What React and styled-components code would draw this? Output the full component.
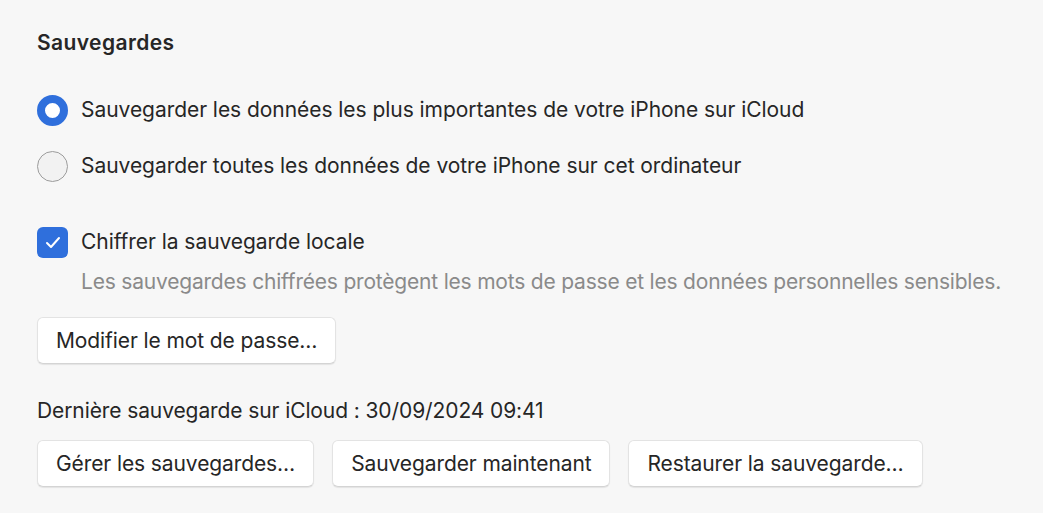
import React, { useState } from "react";
import styled, { createGlobalStyle } from "styled-components";

const GlobalStyle = createGlobalStyle`
  html, body {
    margin: 0;
    padding: 0;
    background: #f7f7f7;
  }
  body {
    font-family: Inter, "Noto Sans", "Liberation Sans", sans-serif;
    color: #262626;
    -webkit-font-smoothing: antialiased;
  }
`;

const Panel = styled.div`
  width: 1043px;
  height: 513px;
  box-sizing: border-box;
  padding: 29px 0 0 37px;
  display: flex;
  flex-direction: column;
`;

const Title = styled.h2`
  margin: 0;
  font-size: 21px;
  font-weight: 600;
  line-height: 28px;
  letter-spacing: 0.4px;
  color: #262626;
`;

const Options = styled.div`
  display: flex;
  flex-direction: column;
  gap: 24px;
  margin-top: 37px;
`;

const Row = styled.label`
  display: flex;
  align-items: center;
  gap: 13px;
  font-size: 21px;
  line-height: 32px;
  letter-spacing: -0.05px;
  cursor: default;
`;

const Radio = styled.span`
  width: 31px;
  height: 31px;
  box-sizing: border-box;
  border-radius: 50%;
  flex: none;
  background: ${(p) => (p.$on ? "#ffffff" : "#f2f2f2")};
  border: ${(p) => (p.$on ? "8.5px solid #2f6fdc" : "1.5px solid #9c9c9c")};
`;

const Checkbox = styled.span`
  width: 31px;
  height: 31px;
  border-radius: 6px;
  flex: none;
  background: #2f6fdc;
  display: flex;
  align-items: center;
  justify-content: center;
`;

const Encrypt = styled.div`
  margin-top: 44px;
  display: flex;
  flex-direction: column;
`;

const Hint = styled.p`
  margin: 11px 0 0 44px;
  font-size: 21px;
  line-height: 26px;
  letter-spacing: -0.2px;
  color: #8a8a8a;
`;

const Button = styled.button`
  font-family: inherit;
  font-size: 21px;
  letter-spacing: -0.1px;
  color: #262626;
  background: #ffffff;
  border: 1px solid #e3e3e3;
  border-bottom-color: #d4d4d4;
  border-radius: 6px;
  box-shadow: 0 1px 1px rgba(0, 0, 0, 0.08);
  height: 47px;
  padding: 0 18px;
  cursor: pointer;
`;

const PasswordRow = styled.div`
  margin-top: 22px;
  display: flex;
`;

const Last = styled.div`
  margin-top: 34px;
  font-size: 21px;
  line-height: 26px;
  letter-spacing: -0.1px;
`;

const ButtonRow = styled.div`
  display: flex;
  gap: 18px;
  margin-top: 16px;
`;

export default function App() {
  const [choice, setChoice] = useState("icloud");

  return (
    <>
      <GlobalStyle />
      <Panel>
        <Title>Sauvegardes</Title>
        <Options>
          <Row onClick={() => setChoice("icloud")}>
            <Radio $on={choice === "icloud"} />
            Sauvegarder les données les plus importantes de votre iPhone sur iCloud
          </Row>
          <Row onClick={() => setChoice("local")}>
            <Radio $on={choice === "local"} />
            Sauvegarder toutes les données de votre iPhone sur cet ordinateur
          </Row>
        </Options>
        <Encrypt>
          <Row>
            <Checkbox>
              <svg width="16" height="13" viewBox="0 0 16 13">
                <path
                  d="M2 7 L6 11 L14 2"
                  fill="none"
                  stroke="#fff"
                  strokeWidth="2"
                  strokeLinecap="round"
                  strokeLinejoin="round"
                />
              </svg>
            </Checkbox>
            Chiffrer la sauvegarde locale
          </Row>
          <Hint>
            Les sauvegardes chiffrées protègent les mots de passe et les données personnelles sensibles.
          </Hint>
        </Encrypt>
        <PasswordRow>
          <Button>Modifier le mot de passe…</Button>
        </PasswordRow>
        <Last>Dernière sauvegarde sur iCloud : 30/09/2024 09:41</Last>
        <ButtonRow>
          <Button>Gérer les sauvegardes…</Button>
          <Button>Sauvegarder maintenant</Button>
          <Button>Restaurer la sauvegarde…</Button>
        </ButtonRow>
      </Panel>
    </>
  );
}
